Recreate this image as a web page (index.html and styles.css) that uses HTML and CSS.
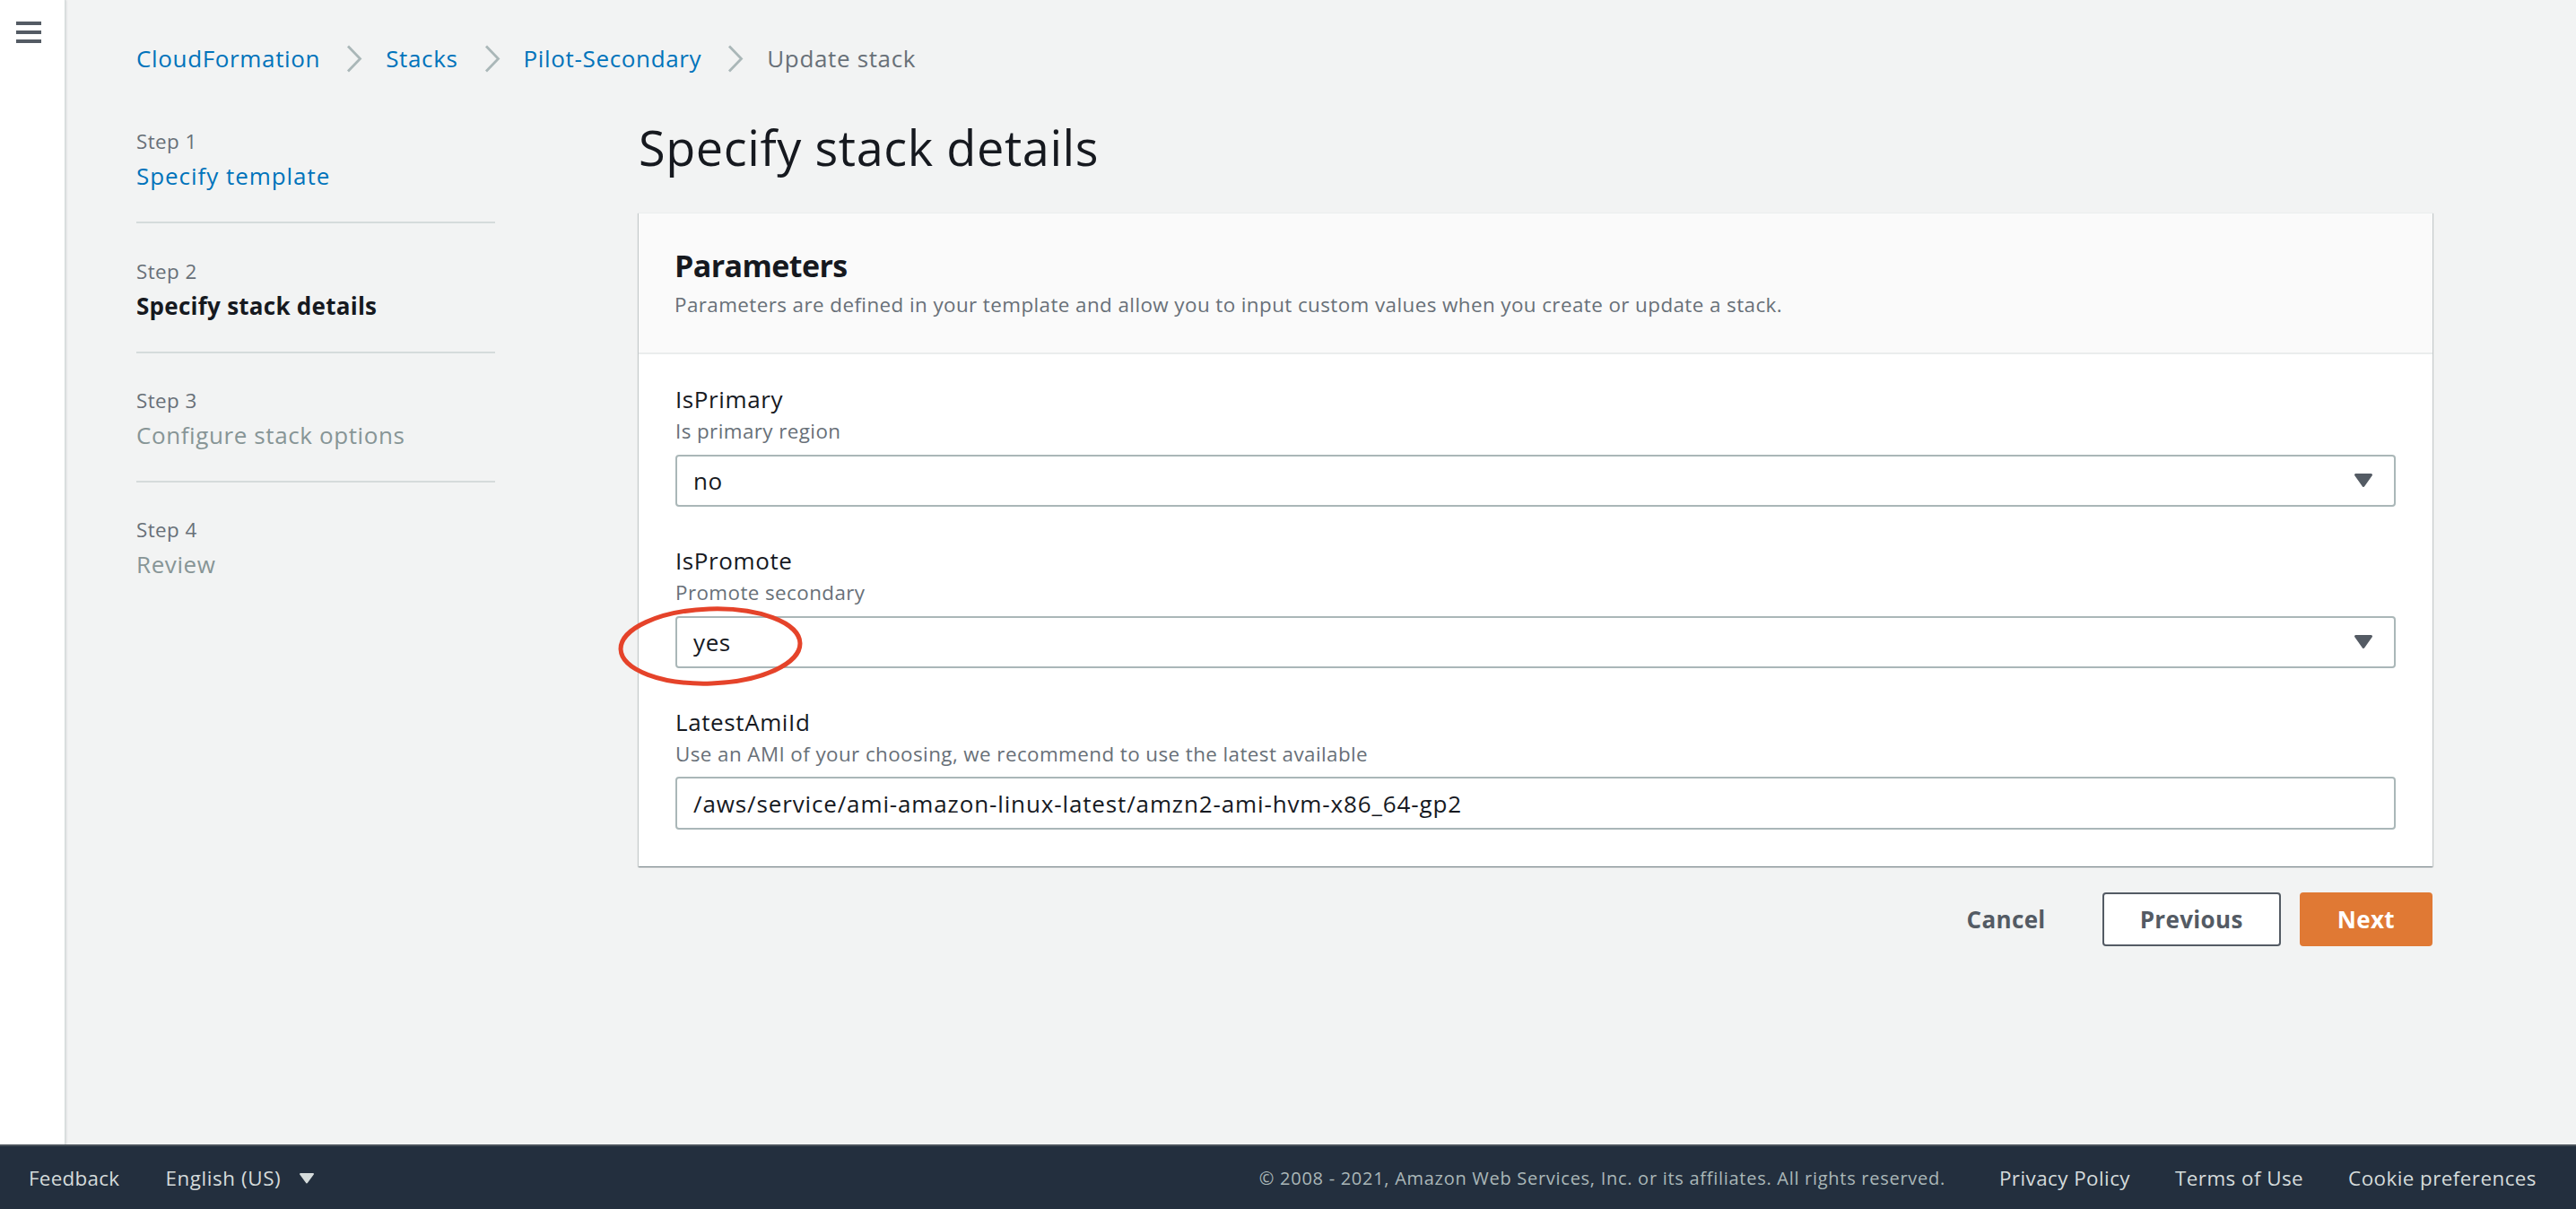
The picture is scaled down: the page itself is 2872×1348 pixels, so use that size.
FILE: index.html
```html
<!DOCTYPE html>
<html lang="en">
<head>
<meta charset="utf-8">
<title>Update stack - CloudFormation</title>
<link rel="stylesheet" href="styles.css">
</head>
<body>
<div class="app">
  <aside class="rail">
    <div class="burger"><span></span><span></span><span></span></div>
  </aside>
  <main class="main">
    <nav class="crumbs">
      <a href="#">CloudFormation</a>
      <svg class="sep" width="18" height="31" viewBox="0 0 18 31"><polyline points="2,1.5 15.5,15.5 2,29.5" fill="none" stroke="#aab7b8" stroke-width="2.8"/></svg>
      <a href="#">Stacks</a>
      <svg class="sep" width="18" height="31" viewBox="0 0 18 31"><polyline points="2,1.5 15.5,15.5 2,29.5" fill="none" stroke="#aab7b8" stroke-width="2.8"/></svg>
      <a href="#">Pilot-Secondary</a>
      <svg class="sep" width="18" height="31" viewBox="0 0 18 31"><polyline points="2,1.5 15.5,15.5 2,29.5" fill="none" stroke="#aab7b8" stroke-width="2.8"/></svg>
      <span class="current">Update stack</span>
    </nav>
    <div class="wizard">
      <ol class="steps">
        <li class="step">
          <div class="step-label">Step 1</div>
          <a class="step-title link" href="#">Specify template</a>
        </li>
        <li class="step">
          <div class="step-label">Step 2</div>
          <div class="step-title active">Specify stack details</div>
        </li>
        <li class="step">
          <div class="step-label">Step 3</div>
          <div class="step-title disabled">Configure stack options</div>
        </li>
        <li class="step">
          <div class="step-label">Step 4</div>
          <div class="step-title disabled">Review</div>
        </li>
      </ol>
      <section class="content">
        <h1 class="title">Specify stack details</h1>
        <div class="card">
          <div class="card-head">
            <h2 class="card-title">Parameters</h2>
            <p class="card-desc">Parameters are defined in your template and allow you to input custom values when you create or update a stack.</p>
          </div>
          <div class="card-body">
            <div class="field">
              <div class="label">IsPrimary</div>
              <div class="desc">Is primary region</div>
              <div class="control select">
                <span class="value">no</span>
                <svg class="caret" width="22" height="17" viewBox="0 0 22 17"><path d="M2.5 2.5 H19.5 L11 14.5 Z" fill="#545b64" stroke="#545b64" stroke-width="3" stroke-linejoin="round"/></svg>
              </div>
            </div>
            <div class="field">
              <div class="label">IsPromote</div>
              <div class="desc">Promote secondary</div>
              <div class="control select">
                <span class="value">yes</span>
                <svg class="caret" width="22" height="17" viewBox="0 0 22 17"><path d="M2.5 2.5 H19.5 L11 14.5 Z" fill="#545b64" stroke="#545b64" stroke-width="3" stroke-linejoin="round"/></svg>
                <svg class="ring" width="206" height="89" viewBox="0 0 206 89"><ellipse cx="103" cy="44.5" rx="100" ry="41.5" fill="none" stroke="#e5432a" stroke-width="5" transform="rotate(-2 103 44.5)"/></svg>
              </div>
            </div>
            <div class="field">
              <div class="label">LatestAmiId</div>
              <div class="desc">Use an AMI of your choosing, we recommend to use the latest available</div>
              <div class="control input">
                <span class="value path">/aws/service/ami-amazon-linux-latest/amzn2-ami-hvm-x86_64-gp2</span>
              </div>
            </div>
          </div>
        </div>
        <div class="actions">
          <button class="btn btn-link">Cancel</button>
          <button class="btn btn-normal">Previous</button>
          <button class="btn btn-primary">Next</button>
        </div>
      </section>
    </div>
  </main>
</div>
<footer class="footer">
  <span class="f-item">Feedback</span>
  <span class="f-item lang">English (US)
    <svg class="f-caret" width="18" height="13" viewBox="0 0 18 13"><path d="M2 2 H16 L9 11.5 Z" fill="#d5dbdb" stroke="#d5dbdb" stroke-width="2" stroke-linejoin="round"/></svg>
  </span>
  <span class="f-copy">© 2008 - 2021, Amazon Web Services, Inc. or its affiliates. All rights reserved.</span>
  <a class="f-link" href="#">Privacy Policy</a>
  <a class="f-link" href="#">Terms of Use</a>
  <a class="f-link" href="#">Cookie preferences</a>
</footer>
</body>
</html>
```

FILE: styles.css
```css
* { box-sizing: border-box; margin: 0; padding: 0; }
:root { --ff: "Open Sans", "Noto Sans", sans-serif; }
html, body { height: 100%; }
body {
  font-family: var(--ff);
  background: #f2f3f3;
  color: #16191f;
  display: flex;
  flex-direction: column;
  height: 1348px;
  overflow: hidden;
}
a { text-decoration: none; }

.app { flex: 1; display: flex; min-height: 0; }

.rail {
  width: 73px;
  flex: none;
  background: #fff;
  border-right: 1px solid #d5dbdb;
  box-shadow: 1px 0 2px rgba(0, 28, 36, 0.12);
  padding: 24px 0 0 18px;
}
.burger { display: flex; flex-direction: column; gap: 6px; width: 28px; }
.burger span { height: 4px; background: #545b64; }

.main { flex: 1; padding: 46px 0 0 79px; }

.crumbs { display: flex; align-items: center; font-size: 26px; letter-spacing: 0.65px; line-height: 39.6px; }
.crumbs a { color: #0073bb; }
.crumbs .current { color: #687078; }
.crumbs .sep { margin: 0 26px 0 29px; flex: none; }

.wizard {
  display: grid;
  grid-template-columns: 400px 2000px;
  column-gap: 160px;
  margin-top: 46.6px;
  align-items: start;
}

.steps { list-style: none; padding-top: 12.1px; }
.step { padding: 39.1px 0 30.4px; border-bottom: 2px solid #d5dbdb; }
.step:first-child { padding-top: 0; }
.step:last-child { border-bottom: 0; }
.step-label { font-size: 22.4px; letter-spacing: 0.42px; line-height: 28.8px; color: #687078; }
.step-title { display: block; font-size: 26px; letter-spacing: 0.6px; line-height: 39.6px; margin-top: 4.4px; }
.step-title.link { color: #0073bb; letter-spacing: 0.95px; }
.step-title.active { font-weight: 700; color: #16191f; letter-spacing: 0.26px; }
.step-title.disabled { color: #879596; }

.title { font-size: 54px; letter-spacing: 0.6px; line-height: 64.8px; font-weight: 400; color: #16191f; margin-bottom: 39.6px; }

.card {
  background: #fff;
  border-top: 1px solid #eaeded;
  box-shadow: 0 1px 1px 0 rgba(0, 28, 36, 0.3), 1px 1px 1px 0 rgba(0, 28, 36, 0.15), -1px 1px 1px 0 rgba(0, 28, 36, 0.15);
}
.card-head { background: #fafafa; border-bottom: 2px solid #eaeded; padding: 39.3px 41px 38.8px 40px; }
.card-title { font-size: 34px; letter-spacing: -0.6px; line-height: 39.6px; font-weight: 700; color: #16191f; }
.card-desc { font-size: 22.4px; letter-spacing: 0.42px; line-height: 28.8px; color: #687078; margin-top: 9.3px; }

.card-body { padding: 30.6px 41px 40.7px; display: flex; flex-direction: column; gap: 40.8px; }
.label { font-size: 26px; letter-spacing: 0.6px; line-height: 39.6px; color: #16191f; }
.desc { font-size: 22.4px; letter-spacing: 0.42px; line-height: 28.8px; color: #687078; margin-top: 1.2px; }
.control {
  position: relative;
  margin-top: 11px;
  height: 58.6px;
  border: 2px solid #aab7b8;
  border-radius: 4px;
  background: #fff;
  display: flex;
  align-items: center;
  padding: 0 23px 0 18px;
  font-size: 26px;
  letter-spacing: 0.6px;
  color: #16191f;
}
.control .value { flex: 1; }
.control .path { letter-spacing: 0.87px; }
.caret { flex: none; }
.ring { position: absolute; left: -66.5px; top: -12.2px; pointer-events: none; }

.actions { display: flex; justify-content: flex-end; align-items: center; gap: 21px; margin-top: 29.5px; }
.btn {
  height: 60px;
  padding: 0 40px;
  border: 2px solid transparent;
  border-radius: 4px;
  font-family: var(--ff);
  font-size: 26px;
  letter-spacing: 0.35px;
  font-weight: 700;
  background: transparent;
  color: #545b64;
}
.btn-normal { background: #fff; border-color: #545b64; }
.btn-primary { background: #e07934; border-color: #e07934; color: #fff; }

.footer {
  height: 72px;
  flex: none;
  background: #232f3e;
  border-top: 2px solid #4a525b;
  display: flex;
  align-items: center;
  padding: 0 44px 0 32px;
  font-size: 22.4px;
  letter-spacing: 0.3px;
  color: #d5dbdb;
}
.f-item { margin-right: 51px; }
.lang { display: flex; align-items: center; gap: 20px; letter-spacing: 0.6px; }
.f-copy { margin-left: auto; color: #aab7b8; margin-right: 60px; font-size: 20px; letter-spacing: 0.72px; }
.f-link { color: #d5dbdb; margin-left: 50px; letter-spacing: 0.45px; }
.f-copy + .f-link { margin-left: 0; }
```
